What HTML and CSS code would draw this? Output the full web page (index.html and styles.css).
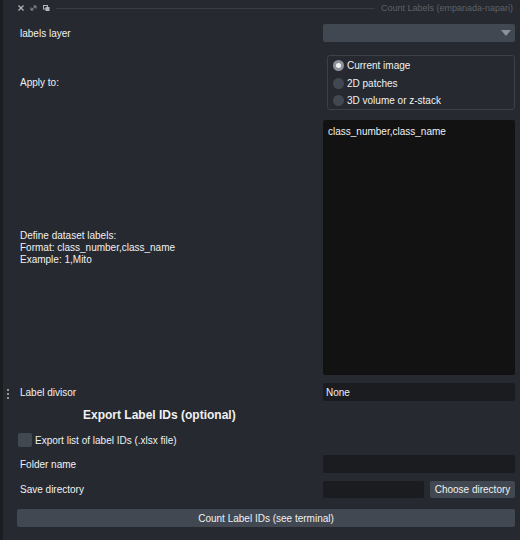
FILE: index.html
```html
<!DOCTYPE html>
<html>
<head>
<meta charset="utf-8">
<link rel="stylesheet" href="styles.css">
</head>
<body>
<div class="app">
  <div class="titlebar">
    <div class="tb-icons">
      <svg class="tb-icon" width="6" height="6" viewBox="0 0 6 6"><path d="M0.5 0.5L5.5 5.5M5.5 0.5L0.5 5.5" stroke="#b4b6ba" stroke-width="1.2"/></svg>
      <svg class="tb-icon" width="7" height="6" viewBox="0 0 7 6"><path d="M1 5L6 1M3.5 1H6V3.5M1 2.5V5H3.5" stroke="#8f9196" stroke-width="1" fill="none"/></svg>
      <svg class="tb-icon" width="7" height="6" viewBox="0 0 7 6"><rect x="0.5" y="0.5" width="4" height="3.5" fill="none" stroke="#b4b6ba"/><rect x="2.5" y="2" width="4" height="4" fill="#b4b6ba"/></svg>
    </div>
    <div class="tb-line"></div>
    <div class="tb-title">Count Labels (empanada-napari)</div>
  </div>

  <div class="row r-layer">
    <div class="lbl">labels layer</div>
    <div class="combo"><span class="arrow"></span></div>
  </div>

  <div class="row r-apply">
    <div class="lbl">Apply to:</div>
    <div class="radios">
      <div class="radio-item"><span class="radio checked"></span>Current image</div>
      <div class="radio-item"><span class="radio"></span>2D patches</div>
      <div class="radio-item"><span class="radio"></span>3D volume or z-stack</div>
    </div>
  </div>

  <div class="row r-text">
    <div class="lbl multi">Define dataset labels:<br>Format: class_number,class_name<br>Example: 1,Mito</div>
    <div class="textarea">class_number,class_name</div>
  </div>

  <div class="row r-div">
    <div class="dots"><span></span><span></span><span></span></div>
    <div class="lbl">Label divisor</div>
    <div class="field">None</div>
  </div>

  <div class="heading">Export Label IDs (optional)</div>

  <div class="check-row">
    <span class="checkbox"></span>Export list of label IDs (.xlsx file)
  </div>

  <div class="row r-folder">
    <div class="lbl">Folder name</div>
    <div class="field"></div>
  </div>

  <div class="row r-save">
    <div class="lbl">Save directory</div>
    <div class="save-w">
      <div class="field short"></div>
      <div class="btn small">Choose directory</div>
    </div>
  </div>

  <div class="btn big">Count Label IDs (see terminal)</div>
</div>
</body>
</html>
```

FILE: styles.css
```css
html, body {
  margin: 0;
  padding: 0;
  background: #262930;
}
body {
  font-family: "Liberation Sans", Arial, sans-serif;
  font-size: 10px;
  color: #f0f1f2;
}
.app {
  width: 517px;
  height: 540px;
  border-left: 3px solid #1c1d21;
  background: #262930;
  box-sizing: content-box;
  position: relative;
}
.titlebar {
  height: 16px;
  display: flex;
  align-items: center;
  padding-left: 15px;
  padding-right: 7px;
}
.tb-icons {
  display: flex;
  align-items: center;
  gap: 6px;
}
.tb-icon { display: block; }
.tb-line {
  flex: 1;
  height: 1px;
  background: #3a3d44;
  margin: 0 6px 0 6px;
}
.tb-title {
  color: #5e6168;
  font-size: 9px;
}
.row {
  display: flex;
  align-items: center;
  padding-left: 17px;
  padding-right: 5px;
  position: relative;
}
.lbl {
  flex: 1;
  font-size: 10px;
}
.lbl.multi {
  line-height: 12px;
}
.r-layer { margin-top: 8px; }
.combo {
  width: 192px;
  height: 18px;
  background: #414851;
  border-radius: 2px;
  position: relative;
}
.arrow {
  position: absolute;
  right: 4px;
  top: 6px;
  width: 0;
  height: 0;
  border-left: 5px solid transparent;
  border-right: 5px solid transparent;
  border-top: 6px solid #8f9199;
}
.r-apply { margin-top: 13px; }
.radios {
  border: 1px solid #3d4047;
  border-radius: 3px;
  display: flex;
  flex-direction: column;
  justify-content: center;
  gap: 6.5px;
  padding-left: 5px;
  padding-top: 1px;
  box-sizing: border-box;
  width: 188px;
  height: 55px;
}
.radio-item {
  display: flex;
  align-items: center;
  gap: 3px;
  font-size: 10px;
  height: 11px;
}
.radio {
  width: 11px;
  height: 11px;
  border-radius: 50%;
  background: #414851;
  position: relative;
}
.radio.checked {
  background: #8f9199;
}
.radio.checked::after {
  content: "";
  position: absolute;
  left: 3px;
  top: 3px;
  width: 5px;
  height: 5px;
  border-radius: 50%;
  background: #f0f1f2;
}
.r-text { margin-top: 10px; }
.textarea {
  width: 192px;
  height: 255px;
  background: #121212;
  box-sizing: border-box;
  padding: 6px 5px;
  font-size: 10px;
  border-radius: 2px;
}
.r-div { margin-top: 8px; }
.field {
  width: 192px;
  height: 18px;
  background: #1b1c20;
  box-sizing: border-box;
  padding: 0 3px;
  display: flex;
  align-items: center;
  border-radius: 2px;
}
.dots {
  position: absolute;
  left: 4px;
  top: 6px;
  display: flex;
  flex-direction: column;
  gap: 2px;
}
.dots span {
  width: 2px;
  height: 2px;
  background: #b9bbbf;
  border-radius: 1px;
}
.heading {
  font-weight: bold;
  font-size: 12px;
  margin-top: 7px;
  height: 15px;
  line-height: 15px;
  padding-left: 80px;
}
.check-row {
  margin-top: 10px;
  padding-left: 15px;
  display: flex;
  align-items: center;
  gap: 3px;
  height: 14px;
}
.checkbox {
  width: 14px;
  height: 14px;
  background: #414851;
  border-radius: 2px;
}
.r-folder { margin-top: 8px; }
.r-save { margin-top: 8px; }
.save-w {
  width: 192px;
  display: flex;
  gap: 6px;
}
.field.short {
  width: 101px;
  height: 17px;
}
.btn {
  background: #414851;
  display: flex;
  align-items: center;
  justify-content: center;
  border-radius: 2px;
  font-size: 10px;
}
.btn.small {
  flex: 1;
  height: 17px;
}
.btn.big {
  margin: 11px 5px 0 14px;
  height: 18px;
}
```
